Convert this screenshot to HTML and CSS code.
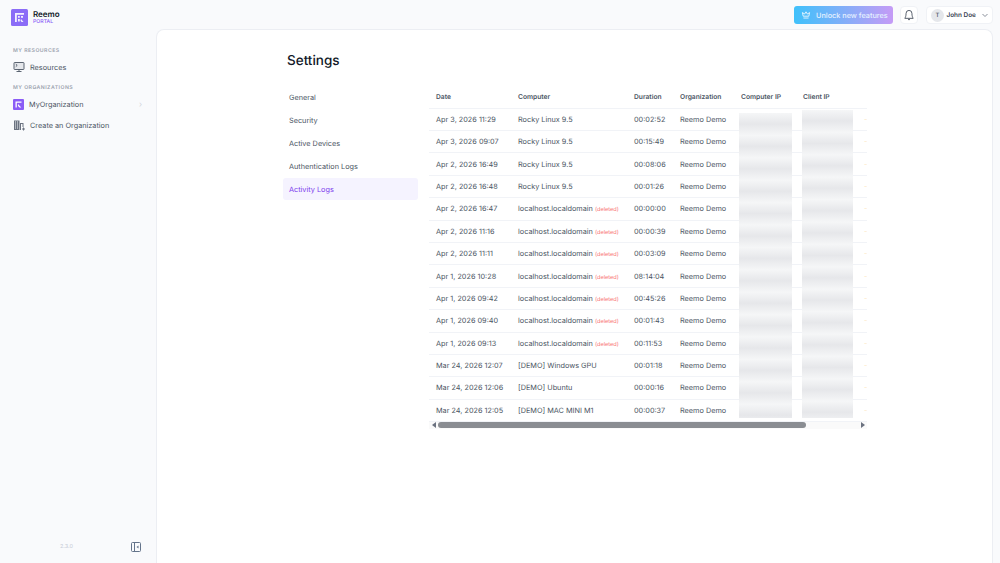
FILE: index.html
```html
<!DOCTYPE html>
<html lang="en">
<head>
    <meta charset="UTF-8">
    <title>Reemo Portal - Activity Logs</title>
    <link rel="stylesheet" href="styles.css">
</head>
<body>
    <div class="app">
        <!-- Sidebar -->
        <aside class="sidebar">
            <div class="brand">
                <svg class="brand-logo" viewBox="0 0 17 17">
                    <rect width="17" height="17" rx="1.500" fill="#8b6cf7"/>
                    <path d="M4 4h9v1.800H5.800V13H4zM7 7h1.800v1.800H7zM10 7h2v1.800h-2zM7 10h1.800v2.500H7zM10 10l2.500 3h-2l-1-1.500z" fill="#fff" opacity=".9"/>
                </svg>
                <div>
                    <div class="brand-name">Reemo</div>
                    <div class="brand-sub">PORTAL</div>
                </div>
            </div>

            <div class="side-label">MY RESOURCES</div>
            <a class="side-item">
                <svg class="side-icon" viewBox="0 0 12 12" fill="none" stroke="#4b5563" stroke-width=".9">
                    <rect x="1" y="1.500" width="10" height="7" rx=".6" fill="#e5e7eb"/>
                    <path d="M3.500 10.500h5M6 8.500v2M2.800 3.200l1.400 1.200-1.400 1.200"/>
                </svg>
                Resources
            </a>

            <div class="side-label">MY ORGANIZATIONS</div>
            <a class="side-item org">
                <svg class="side-icon" viewBox="0 0 11 11">
                    <rect width="11" height="11" rx="1" fill="#8b5cf6"/>
                    <path d="M2.500 2.500h6v1.300H3.800v4.700H2.500zM5 5l3.300 3.500H6.500L5 7z" fill="#fff"/>
                </svg>
                <span class="org-name">MyOrganization</span>
                <span class="org-arrow">›</span>
            </a>
            <a class="side-item">
                <svg class="side-icon" viewBox="0 0 12 12" fill="#6b7280" stroke="none">
                    <path d="M1 1.500h5.500V11H1zM2 2.500v1h1v-1zm2 0v1h1v-1zM2 4.500v1h1v-1zm2 0v1h1v-1zM2 6.500v1h1v-1zm2 0v1h1v-1zM2 8.500v1h1v-1zm2 0v1h1v-1z" fill-rule="evenodd"/>
                    <path d="M7 4h3.500v4H9.500V5H8v6H7z"/>
                    <path d="M10 8.500h1v1h1v1h-1v1h-1v-1H9v-1h1z"/>
                </svg>
                Create an Organization
            </a>

            <div class="side-footer">
                <span class="version">2.3.0</span>
                <svg class="collapse" viewBox="0 0 10 10" fill="none" stroke="#64748b" stroke-width="1">
                    <rect x=".5" y=".5" width="9" height="9" rx="1"/>
                    <path d="M3.500 .5v9"/>
                    <path d="M7.500 3.500v3L5.500 5z" fill="#64748b" stroke="none"/>
                </svg>
            </div>
        </aside>

        <div class="content">
            <!-- Top bar -->
            <header class="topbar">
                <button class="unlock">
                    <svg class="crown" viewBox="0 0 12 10" fill="none" stroke="#fff" stroke-width="1">
                        <path d="M2.500 6.500L1.500 2l2.800 1.800L6 1l1.700 2.800L10.500 2l-1 4.500zM2.800 8.800h6.400"/>
                    </svg>
                    Unlock new features
                </button>
                <button class="bell-btn">
                    <svg class="bell" viewBox="0 0 12 14" fill="none" stroke="#374151" stroke-width="1">
                        <path d="M6 1.500a3.500 3.500 0 0 0-3.500 3.500c0 3.500-1 5-1.500 6h10c-.5-1-1.500-2.500-1.500-6A3.500 3.500 0 0 0 6 1.500zM4.800 12.500h2.400"/>
                    </svg>
                </button>
                <button class="user-btn">
                    <span class="avatar">T</span>
                    <span class="user-name">John Doe</span>
                    <svg class="chev" viewBox="0 0 8 8" fill="none" stroke="#6b7280" stroke-width=".8"><path d="M1.500 3l2.500 2.500L6.500 3"/></svg>
                </button>
            </header>

            <!-- Main panel -->
            <main class="panel">
                <h1>Settings</h1>
                <div class="settings">
                    <nav class="tabs">
                        <a class="tab">General</a>
                        <a class="tab">Security</a>
                        <a class="tab">Active Devices</a>
                        <a class="tab">Authentication Logs</a>
                        <a class="tab active">Activity Logs</a>
                    </nav>

                    <div class="logs">
                        <div class="table-wrap">
                            <table>
                                <colgroup>
                                    <col class="c-date"><col class="c-computer"><col class="c-duration"><col class="c-org"><col class="c-ip"><col class="c-ip"><col class="c-more">
                                </colgroup>
                                <thead>
                                    <tr><th>Date</th><th>Computer</th><th>Duration</th><th>Organization</th><th>Computer IP</th><th>Client IP</th><th></th></tr>
                                </thead>
                                <tbody>
                                    <tr><td>Apr 3, 2026 11:29</td><td>Rocky Linux 9.5</td><td>00:02:52</td><td>Reemo Demo</td><td></td><td></td><td class="dash">-</td></tr>
                                    <tr><td>Apr 3, 2026 09:07</td><td>Rocky Linux 9.5</td><td>00:15:49</td><td>Reemo Demo</td><td></td><td></td><td class="dash">-</td></tr>
                                    <tr><td>Apr 2, 2026 16:49</td><td>Rocky Linux 9.5</td><td>00:08:06</td><td>Reemo Demo</td><td></td><td></td><td class="dash">-</td></tr>
                                    <tr><td>Apr 2, 2026 16:48</td><td>Rocky Linux 9.5</td><td>00:01:26</td><td>Reemo Demo</td><td></td><td></td><td class="dash">-</td></tr>
                                    <tr><td>Apr 2, 2026 16:47</td><td>localhost.localdomain <span class="deleted">(deleted)</span></td><td>00:00:00</td><td>Reemo Demo</td><td></td><td></td><td class="dash">-</td></tr>
                                    <tr><td>Apr 2, 2026 11:16</td><td>localhost.localdomain <span class="deleted">(deleted)</span></td><td>00:00:39</td><td>Reemo Demo</td><td></td><td></td><td class="dash">-</td></tr>
                                    <tr><td>Apr 2, 2026 11:11</td><td>localhost.localdomain <span class="deleted">(deleted)</span></td><td>00:03:09</td><td>Reemo Demo</td><td></td><td></td><td class="dash">-</td></tr>
                                    <tr><td>Apr 1, 2026 10:28</td><td>localhost.localdomain <span class="deleted">(deleted)</span></td><td>08:14:04</td><td>Reemo Demo</td><td></td><td></td><td class="dash">-</td></tr>
                                    <tr><td>Apr 1, 2026 09:42</td><td>localhost.localdomain <span class="deleted">(deleted)</span></td><td>00:45:26</td><td>Reemo Demo</td><td></td><td></td><td class="dash">-</td></tr>
                                    <tr><td>Apr 1, 2026 09:40</td><td>localhost.localdomain <span class="deleted">(deleted)</span></td><td>00:01:43</td><td>Reemo Demo</td><td></td><td></td><td class="dash">-</td></tr>
                                    <tr><td>Apr 1, 2026 09:13</td><td>localhost.localdomain <span class="deleted">(deleted)</span></td><td>00:11:53</td><td>Reemo Demo</td><td></td><td></td><td class="dash">-</td></tr>
                                    <tr><td>Mar 24, 2026 12:07</td><td>[DEMO] Windows GPU</td><td>00:01:18</td><td>Reemo Demo</td><td></td><td></td><td class="dash">-</td></tr>
                                    <tr><td>Mar 24, 2026 12:06</td><td>[DEMO] Ubuntu</td><td>00:00:16</td><td>Reemo Demo</td><td></td><td></td><td class="dash">-</td></tr>
                                    <tr><td>Mar 24, 2026 12:05</td><td>[DEMO] MAC MINI M1</td><td>00:00:37</td><td>Reemo Demo</td><td></td><td></td><td class="dash">-</td></tr>
                                </tbody>
                            </table>
                            <!-- blurred IP columns -->
                            <div class="blur blur-computer"></div>
                            <div class="blur blur-client"></div>
                        </div>
                        <div class="scrollbar">
                            <span class="arrow arrow-left"></span>
                            <div class="track"><div class="thumb"></div></div>
                            <span class="arrow arrow-right"></span>
                        </div>
                    </div>
                </div>
            </main>
        </div>
    </div>
</body>
</html>
```

FILE: styles.css
```css
* {
    margin: 0;
    padding: 0;
    box-sizing: border-box;
    font-family: 'Inter', 'Liberation Sans', sans-serif;
    text-rendering: geometricPrecision;
}

body {
    background: #f9fafc;
    color: #4b5563;
    overflow: hidden;
}

.app {
    display: flex;
    height: 563px;
}

/* Sidebar */
.sidebar {
    width: 156px;
    flex-shrink: 0;
    display: flex;
    flex-direction: column;
    padding: 9px 0 0 13px;
}

.brand {
    display: flex;
    align-items: center;
    gap: 5px;
    margin: 0 0 21px -2px;
}

.brand-logo {
    width: 17px;
    height: 17px;
}

.brand-name {
    font-size: 8px;
    line-height: 10px;
    font-weight: 600;
    color: #111827;
}

.brand-sub {
    font-size: 5.200px;
    line-height: 7px;
    font-weight: 500;
    color: #8b5cf6;
}

.side-label {
    font-size: 5.200px;
    line-height: 8px;
    font-weight: 600;
    letter-spacing: .45px;
    color: #9ca3af;
}

.side-item + .side-label {
    margin-top: 7px;
}

.side-item {
    display: flex;
    align-items: center;
    gap: 5px;
    height: 20px;
    margin-top: 2px;
    font-size: 7.300px;
    color: #4b5563;
}

.side-icon {
    width: 12px;
    height: 12px;
}

.org .side-icon {
    width: 11px;
    height: 11px;
}

.org + .side-item {
    margin-top: 1px;
}

.org-name {
    flex: 1;
}

.org-arrow {
    margin-right: 14px;
    font-size: 8px;
    color: #d1d5db;
}

.side-footer {
    margin-top: auto;
    height: 21px;
    display: flex;
    align-items: flex-start;
    padding-right: 15px;
    justify-content: flex-end;
    gap: 58px;
}

.version {
    font-size: 5.500px;
    line-height: 10px;
    color: #c7ccd6;
}

.collapse {
    width: 10px;
    height: 10px;
}

/* Top bar */
.content {
    flex: 1;
    display: flex;
    flex-direction: column;
    min-width: 0;
}

.topbar {
    height: 29px;
    flex-shrink: 0;
    display: flex;
    align-items: flex-start;
    justify-content: flex-end;
    gap: 8px;
    padding: 6px 7px 0 0;
}

button {
    border: none;
    cursor: pointer;
}

.unlock {
    width: 99px;
    height: 18px;
    display: flex;
    align-items: center;
    gap: 5px;
    padding-left: 7px;
    margin-right: -1px;
    border-radius: 3px;
    background: linear-gradient(90deg, #3fc1fb, #c59bf6);
    color: #e6f2ff;
    font-size: 7.300px;
    font-weight: 500;
    white-space: nowrap;
}

.crown {
    width: 10px;
    height: 8px;
    flex-shrink: 0;
}

.bell-btn {
    width: 18px;
    height: 18px;
    display: flex;
    align-items: center;
    justify-content: center;
    border-radius: 4px;
    background: #fff;
    border: 1px solid #f0f2f6;
}

.bell {
    width: 10px;
    height: 12px;
}

.user-btn {
    width: 67px;
    height: 18px;
    display: flex;
    align-items: center;
    padding-left: 4px;
    border-radius: 4px;
    background: #fff;
    border: 1px solid #f0f2f6;
}

.avatar {
    width: 13px;
    height: 13px;
    border-radius: 50%;
    background: #e5e7eb;
    color: #4b5563;
    font-size: 6px;
    font-weight: 500;
    line-height: 13px;
    text-align: center;
}

.user-name {
    margin-left: 2.500px;
    font-size: 6.400px;
    font-weight: 600;
    color: #374151;
    white-space: nowrap;
}

.chev {
    width: 8px;
    height: 8px;
    margin-left: 5.500px;
}

/* Main panel */
.panel {
    flex: 1;
    margin-right: 7px;
    background: #fff;
    border: 1px solid #eceef3;
    border-bottom: none;
    border-radius: 8px 8px 0 0;
    padding: 22px 0 0 126px;
}

h1 {
    padding-left: 4px;
    font-size: 13.500px;
    line-height: 19px;
    font-weight: 500;
    color: #111827;
}

.settings {
    display: flex;
    gap: 11px;
    margin-top: 14px;
}

.tabs {
    width: 135px;
    flex-shrink: 0;
    display: flex;
    flex-direction: column;
    gap: 1px;
    padding-top: 1px;
}

.tab {
    height: 22px;
    line-height: 23.500px;
    padding-left: 6px;
    border-radius: 3px;
    font-size: 7.300px;
    color: #4b5563;
}

.tab.active {
    background: #f5f3ff;
    color: #7c3aed;
}

/* Activity table */
.logs {
    width: 438px;
}

.table-wrap {
    position: relative;
    overflow: hidden;
}

table {
    width: 438px;
    table-layout: fixed;
    border-collapse: collapse;
    font-size: 7.300px;
}

.c-date { width: 82px; }
.c-computer { width: 116px; }
.c-duration { width: 46px; }
.c-org { width: 61px; }
.c-ip { width: 62px; }
.c-more { width: 9px; }

th {
    height: 23.100px;
    padding: 1px 0 0 7px;
    text-align: left;
    font-size: 6.700px;
    font-weight: 600;
    color: #4b5563;
    border-bottom: 1px solid #f1f3f7;
}

td {
    height: 22.400px;
    padding: 0 0 0 7px;
    white-space: nowrap;
    color: #4b5563;
    border-bottom: 1px solid #f1f3f7;
}

.deleted {
    font-size: 5.600px;
    color: #f87171;
}

td.dash {
    padding-left: 6px;
    color: #fde7c4;
}

.blur {
    position: absolute;
    bottom: 4px;
    background: repeating-linear-gradient(180deg, #f5f6f7 0, #e6e7ea 11px, #f5f6f7 22.400px);
}

.blur-computer {
    left: 310px;
    width: 53px;
    top: 28px;
}

.blur-client {
    left: 373px;
    width: 51px;
    top: 25px;
}

/* Horizontal scrollbar */
.scrollbar {
    display: flex;
    align-items: center;
    height: 8px;
    background: #fafafa;
    margin-top: -1px;
}

.arrow {
    width: 9px;
    height: 8px;
    display: flex;
    align-items: center;
    justify-content: center;
}

.arrow::before {
    content: "";
    border-top: 3px solid transparent;
    border-bottom: 3px solid transparent;
}

.arrow-left::before {
    border-right: 4px solid #6b7280;
}

.arrow-right::before {
    border-left: 4px solid #6b7280;
}

.track {
    flex: 1;
    height: 6px;
}

.thumb {
    width: 368px;
    height: 100%;
    border-radius: 3px;
    background: #8a8d92;
}
```
